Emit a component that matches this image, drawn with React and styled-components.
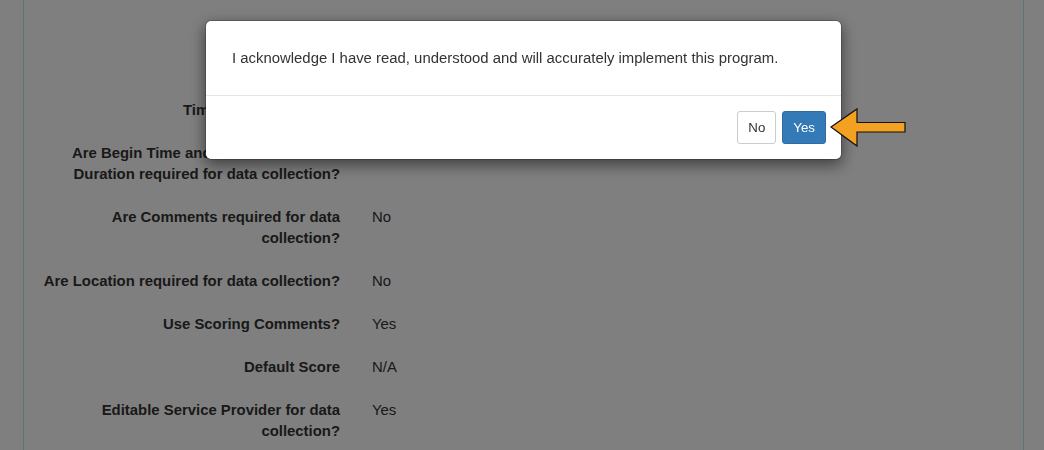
import React from "react";
import styled, { createGlobalStyle } from "styled-components";

const GlobalStyle = createGlobalStyle`
  html, body {
    margin: 0;
    padding: 0;
    background: #ffffff;
    overflow: hidden;
  }
  body {
    font-family: "Liberation Sans", Arial, Helvetica, sans-serif;
    font-size: 14.9px;
    line-height: 21px;
    color: #333333;
  }
  * { box-sizing: border-box; }
`;

const Panel = styled.div`
  margin: 0 20px 0 23px;
  min-height: 450px;
  border-left: 1px solid #bce8f1;
  border-right: 1px solid #bce8f1;
  padding: 100px 16px 0 16px;
`;

const Form = styled.div`
  display: flex;
  flex-direction: column;
  gap: 22px;
`;

const Row = styled.div`
  display: grid;
  grid-template-columns: 300px 1fr;
  column-gap: 32px;
`;

const Label = styled.div`
  font-weight: bold;
  text-align: right;
`;

const Value = styled.div`
  font-weight: normal;
`;

const Backdrop = styled.div`
  position: fixed;
  inset: 0;
  background: rgba(0, 0, 0, 0.5);
`;

const Modal = styled.div`
  position: fixed;
  top: 20px;
  left: 205px;
  width: 637px;
  background: #ffffff;
  border: 1px solid rgba(0, 0, 0, 0.2);
  border-radius: 6px;
  box-shadow: 0 5px 15px rgba(0, 0, 0, 0.5);
  background-clip: padding-box;
`;

const ModalBody = styled.div`
  padding: 27px 26px 26px;
  color: #333333;
`;

const ModalFooter = styled.div`
  display: flex;
  justify-content: flex-end;
  gap: 6px;
  padding: 15px 15px 15px;
  border-top: 1px solid #e5e5e5;
`;

const Button = styled.button`
  font-family: "Liberation Sans", Arial, Helvetica, sans-serif;
  font-size: 13.3px;
  line-height: 17px;
  padding: 7px 10px;
  border-radius: 3px;
  border: 1px solid ${(p) => (p.$primary ? "#2e6da4" : "#cccccc")};
  background: ${(p) => (p.$primary ? "#337ab7" : "#ffffff")};
  color: ${(p) => (p.$primary ? "#ffffff" : "#333333")};
  cursor: pointer;
`;

const Pointer = styled.svg`
  position: fixed;
  left: 829px;
  top: 107px;
`;

const rows = [
  { label: "Time Interval Duration", value: "" },
  { label: "Are Begin Time and End Time or Total Duration required for data collection?", value: "" },
  { label: "Are Comments required for data collection?", value: "No" },
  { label: "Are Location required for data collection?", value: "No" },
  { label: "Use Scoring Comments?", value: "Yes" },
  { label: "Default Score", value: "N/A" },
  { label: "Editable Service Provider for data collection?", value: "Yes" },
];

export default function App() {
  return (
    <>
      <GlobalStyle />
      <Panel>
        <Form>
          {rows.map((r) => (
            <Row key={r.label}>
              <Label>{r.label}</Label>
              <Value>{r.value}</Value>
            </Row>
          ))}
        </Form>
      </Panel>
      <Backdrop />
      <Modal>
        <ModalBody>
          I acknowledge I have read, understood and will accurately implement this program.
        </ModalBody>
        <ModalFooter>
          <Button>No</Button>
          <Button $primary>Yes</Button>
        </ModalFooter>
      </Modal>
      <Pointer width="80" height="42" viewBox="0 0 80 42">
        <polygon
          points="2,20 28,2 28,15.5 76,15.5 76,25 28,25 28,39"
          fill="#f4a020"
          stroke="#111111"
          strokeWidth="1.2"
          strokeLinejoin="miter"
        />
      </Pointer>
    </>
  );
}
